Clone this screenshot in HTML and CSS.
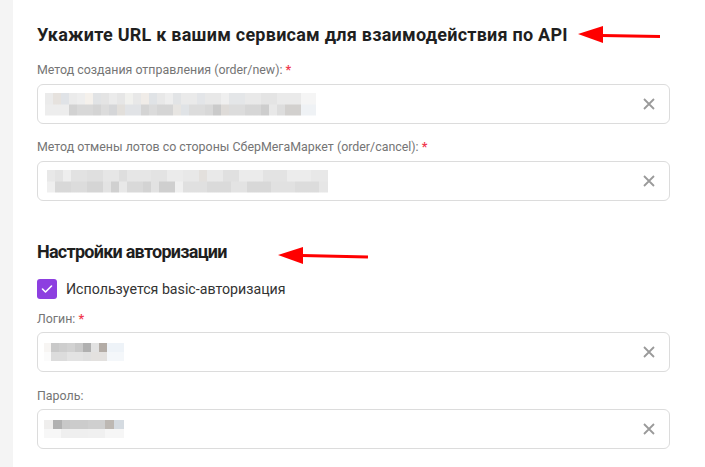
FILE: index.html
```html
<!DOCTYPE html>
<html lang="ru">
<head>
    <meta charset="UTF-8">
    <title>Настройки API</title>
    <link rel="stylesheet" href="styles.css">
</head>
<body>
    <div class="page">
        <div class="sidebar"></div>
        <div class="content">
            <section class="section">
                <h2 class="section-title title-api">Укажите URL к вашим сервисам для взаимодействия по API</h2>
                <div class="field">
                    <label class="field-label">Метод создания отправления (order/new): <span class="req">*</span></label>
                    <div class="input">
                        <div class="blur blur-url1"></div>
                        <svg class="clear" width="14" height="14" viewBox="0 0 14 14"><path d="M2 2L12 12M12 2L2 12" stroke="#9a9a9a" stroke-width="1.8" fill="none"/></svg>
                    </div>
                </div>
                <div class="field">
                    <label class="field-label">Метод отмены лотов со стороны СберМегаМаркет (order/cancel): <span class="req">*</span></label>
                    <div class="input">
                        <div class="blur blur-url2"></div>
                        <svg class="clear" width="14" height="14" viewBox="0 0 14 14"><path d="M2 2L12 12M12 2L2 12" stroke="#9a9a9a" stroke-width="1.8" fill="none"/></svg>
                    </div>
                </div>
            </section>

            <section class="section auth">
                <h2 class="section-title title-auth">Настройки авторизации</h2>
                <label class="checkbox">
                    <span class="box">
                        <svg width="12" height="10" viewBox="0 0 12 10"><path d="M1.5 5L4.5 8L10.5 2" stroke="#fff" stroke-width="1.6" fill="none" stroke-linecap="round" stroke-linejoin="round"/></svg>
                    </span>
                    Используется basic-авторизация
                </label>
                <div class="field tight">
                    <label class="field-label">Логин: <span class="req">*</span></label>
                    <div class="input">
                        <div class="blur blur-short blur-login"></div>
                        <svg class="clear" width="14" height="14" viewBox="0 0 14 14"><path d="M2 2L12 12M12 2L2 12" stroke="#9a9a9a" stroke-width="1.8" fill="none"/></svg>
                    </div>
                </div>
                <div class="field tight">
                    <label class="field-label">Пароль:</label>
                    <div class="input">
                        <div class="blur blur-short blur-pass"></div>
                        <svg class="clear" width="14" height="14" viewBox="0 0 14 14"><path d="M2 2L12 12M12 2L2 12" stroke="#9a9a9a" stroke-width="1.8" fill="none"/></svg>
                    </div>
                </div>
            </section>
        </div>

        <svg class="arrow arrow-api" width="90" height="24" viewBox="0 0 90 24">
            <path d="M24 12.5L82 13.5" stroke="#f00" stroke-width="3"/>
            <polygon points="0,11 25,3 25,20" fill="#f00"/>
        </svg>
        <svg class="arrow arrow-auth" width="96" height="24" viewBox="0 0 96 24">
            <path d="M24 11.5L90 13" stroke="#f00" stroke-width="3"/>
            <polygon points="0,11 25,3 25,20" fill="#f00"/>
        </svg>
    </div>
</body>
</html>
```

FILE: styles.css
```css
body {
    margin: 0;
    background: #ffffff;
    font-family: Roboto, "Liberation Sans", sans-serif;
    color: #222;
}

.page {
    position: relative;
    display: flex;
    min-height: 467px;
    overflow: hidden;
}

.sidebar {
    width: 13px;
    flex-shrink: 0;
    background: #f4f4f4;
}

.content {
    width: 633px;
    padding: 23px 0 0 24px;
}

.section-title {
    margin: 0 0 15px;
    font-family: Roboto, "Liberation Sans", sans-serif;
    font-size: 18px;
    font-weight: 700;
    line-height: 24px;
    color: #1f1f1f;
}

.title-api {
    letter-spacing: 0.24px;
}

.title-auth {
    letter-spacing: -0.75px;
}

.field {
    margin-bottom: 15px;
}

.field.tight {
    margin-bottom: 16px;
}

.field-label {
    display: block;
    font-size: 12.4px;
    line-height: 16px;
    color: #757575;
    margin-bottom: 6px;
}

.field.tight .field-label {
    margin-bottom: 5px;
}

.req {
    color: #f0394f;
    font-weight: 700;
}

.input {
    height: 40px;
    box-sizing: border-box;
    border: 1px solid #dcdcdc;
    border-radius: 6px;
    display: flex;
    align-items: center;
    justify-content: space-between;
    padding: 0 13px 0 6px;
}

.clear {
    flex-shrink: 0;
}

/* blurred values */
.blur {
    height: 23px;
    background-repeat: no-repeat;
    background-size: 100% 50%;
    background-position: top, bottom;
}

.blur-url1 {
    width: 271px;
    margin-left: 1px;
    background-image:
        linear-gradient(90deg, #ebebeb 0 8px, #e6e2de 8px 16px, #e0e3e7 16px 24px, #ebebeb 24px 32px, #eeeeee 32px 40px, #f5f1ec 40px 48px, #e1e3e5 48px 56px, #e4e4e4 56px 64px, #ebebeb 64px 72px, #e6e6e6 72px 80px, #f1f1ee 80px 88px, #e8e8e8 88px 96px, #f0ece8 96px 104px, #e0e3e6 104px 112px, #e8e8e8 112px 120px, #eeeeee 120px 128px, #e2e4e6 128px 136px, #eaeaea 136px 152px, #e3e5e8 152px 160px, #e8e8e8 160px 176px, #efefef 176px 184px, #e4e6e8 184px 200px, #e9e9e9 200px 216px, #e4e4e4 216px 232px, #eaeaea 232px 256px, #f5f5f5 256px 271px),
        linear-gradient(90deg, #ededed 0 24px, #d2d2d2 24px 32px, #d8d8d8 32px 48px, #d4d4d4 48px 56px, #dcdcdc 56px 64px, #d5d6d8 64px 72px, #e2dfdb 72px 80px, #e1e3e6 80px 96px, #d4d4d4 96px 104px, #dbdbdb 104px 112px, #d5d5d5 112px 128px, #e7e5e2 128px 136px, #e0e3e6 136px 144px, #dcdcdc 144px 160px, #d8d8d8 160px 168px, #cacaca 168px 176px, #dedbd8 176px 184px, #dcdcdc 184px 200px, #d6d6d6 200px 216px, #cdcdcd 216px 224px, #e8e8e8 224px 232px, #dddddd 232px 240px, #d2d0ce 240px 256px, #eff2f5 256px 271px);
}

.blur-url2 {
    width: 281px;
    margin-left: 3px;
    background-image:
        linear-gradient(90deg, #e8e8e8 0 8px, #e3e3e3 8px 16px, #eeeeee 16px 24px, #e2e2e2 24px 40px, #dfdfdf 40px 56px, #e6e6e6 56px 72px, #dedede 72px 80px, #e6e6e6 80px 104px, #e3e3e3 104px 120px, #ebebeb 120px 136px, #e8e8e8 136px 152px, #e3e0dd 152px 160px, #e9e9e9 160px 176px, #e0e0e0 176px 192px, #ebebeb 192px 216px, #e3e3e3 216px 240px, #ececec 240px 264px, #e8e8e8 264px 281px),
        linear-gradient(90deg, #efefef 0 8px, #d8d8d8 8px 24px, #dcdcdc 24px 40px, #d5d5d5 40px 56px, #e3e3e3 56px 64px, #d0d0d0 64px 72px, #e8e8e8 72px 80px, #d9d9d9 80px 96px, #d3d3d3 96px 104px, #e2e2e2 104px 112px, #cfcfcf 112px 128px, #f0f0f0 128px 136px, #e0e0e0 136px 160px, #dadada 160px 184px, #e3e3e3 184px 200px, #d8d8d8 200px 224px, #e1e1e1 224px 248px, #dcdcdc 248px 272px, #e6e6e6 272px 281px);
}

.blur-short {
    width: 80px;
    height: 18px;
}

.blur-login {
    background-image:
        linear-gradient(90deg, #f7f5f3 0 7px, #c9c9c9 7px 15px, #cecece 15px 23px, #d2d2d2 23px 31px, #c9c9c9 31px 39px, #b0b0b0 39px 47px, #e2e2e2 47px 55px, #b3aca6 55px 63px, #eef3f8 63px 80px),
        linear-gradient(90deg, #fbfbfb 0 7px, #dcdcdc 7px 23px, #e3e3e3 23px 39px, #e0e0e0 39px 47px, #e3e1df 47px 63px, #f4f7fa 63px 80px);
}

.blur-pass {
    background-image:
        linear-gradient(90deg, #efeeed 0 9px, #b1b1b1 9px 18px, #c8c8c8 18px 26px, #cccccc 26px 44px, #cfcfcf 44px 61px, #bdb8b3 61px 70px, #d5dbe1 70px 80px),
        linear-gradient(90deg, #f7f7f7 0 17px, #efefef 17px 44px, #f0f0f0 44px 61px, #f6f6f6 61px 80px);
}

.auth {
    margin-top: 39px;
}

.checkbox {
    display: flex;
    align-items: center;
    gap: 9px;
    font-size: 14.2px;
    line-height: 20px;
    color: #333;
    margin-bottom: 12px;
}

.box {
    width: 20px;
    height: 20px;
    border-radius: 3px;
    background: #8d3fe0;
    display: flex;
    align-items: center;
    justify-content: center;
}

/* annotation arrows drawn over the screenshot */
.arrow {
    position: absolute;
}

.arrow-api {
    left: 578px;
    top: 23px;
}

.arrow-auth {
    left: 278px;
    top: 244px;
}
```
